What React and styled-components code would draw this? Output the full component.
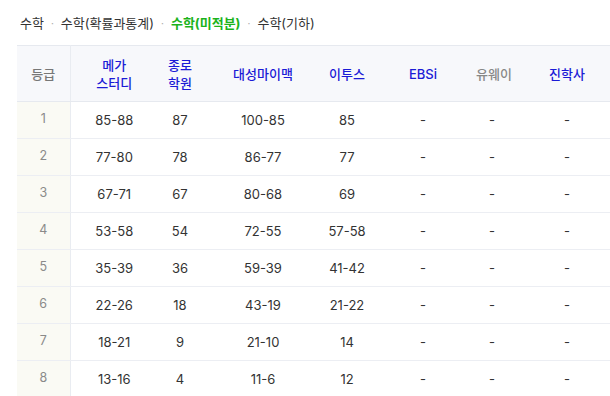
import React from 'react';
import styled, { createGlobalStyle } from 'styled-components';

const GlobalStyle = createGlobalStyle`
  html, body {
    margin: 0;
    padding: 0;
    background: #fff;
    overflow: hidden;
  }
  body {
    font-family: "Inter", "Noto Sans CJK KR", sans-serif;
    -webkit-font-smoothing: antialiased;
  }
`;

const Wrapper = styled.div`
  width: 610px;
  height: 396px;
  overflow: hidden;
`;

const Tabs = styled.div`
  display: flex;
  align-items: center;
  height: 45px;
  padding-left: 20px;
  box-sizing: border-box;
  font-size: 13px;
  color: #333;
`;

const Tab = styled.span`
  color: ${(p) => (p.active ? '#1bb31b' : '#333')};
  font-weight: ${(p) => (p.active ? 700 : 400)};
`;

const Dot = styled.span`
  color: #aaa;
  font-size: 10px;
  margin: 0 7px;
`;

const TableWrap = styled.div`
  padding-left: 17px;
`;

const Table = styled.table`
  border-collapse: collapse;
  table-layout: fixed;
  width: 609px;
  font-size: 13px;
`;

const HeadCell = styled.th`
  height: 55px;
  padding: 0;
  background: #f7f8fb;
  border-top: 1px solid #e6e9ef;
  border-bottom: 1px solid #e6e9ef;
  border-right: ${(p) => (p.first ? '1px solid #e9ecf1' : 'none')};
  font-weight: 500;
  line-height: 18px;
  white-space: nowrap;
  color: ${(p) => p.tone};
`;

const Row = styled.tr`
  height: 37px;
`;

const Cell = styled.td`
  height: 36px;
  padding: 0;
  line-height: 16px;
  text-align: center;
  color: #333;
  border-bottom: 1px solid #eceef3;
  box-sizing: border-box;
`;

const GradeCell = styled(Cell)`
  background: #fafaf4;
  border-right: 1px solid #e9ecf1;
  color: #8a8a8a;
  font-size: 12.5px;
  padding-bottom: 3px;
`;

const BLUE = '#1b1bd6';

const columns = [
  { label: ['등급'], width: 53, tone: '#777' },
  { label: ['메가', '스터디'], width: 88, tone: BLUE },
  { label: ['종로', '학원'], width: 44, tone: BLUE },
  { label: ['대성마이맥'], width: 122, tone: BLUE },
  { label: ['이투스'], width: 46, tone: BLUE },
  { label: ['EBSi'], width: 106, tone: BLUE },
  { label: ['유웨이'], width: 32, tone: '#888' },
  { label: ['진학사'], width: 118, tone: BLUE },
];

const rows = [
  ['1', '85-88', '87', '100-85', '85'],
  ['2', '77-80', '78', '86-77', '77'],
  ['3', '67-71', '67', '80-68', '69'],
  ['4', '53-58', '54', '72-55', '57-58'],
  ['5', '35-39', '36', '59-39', '41-42'],
  ['6', '22-26', '18', '43-19', '21-22'],
  ['7', '18-21', '9', '21-10', '14'],
  ['8', '13-16', '4', '11-6', '12'],
];

const tabs = ['수학', '수학(확률과통계)', '수학(미적분)', '수학(기하)'];

function App() {
  return (
    <Wrapper>
      <GlobalStyle />
      <Tabs>
        {tabs.map((t, i) => (
          <React.Fragment key={t}>
            {i > 0 && <Dot>·</Dot>}
            <Tab active={i === 2}>{t}</Tab>
          </React.Fragment>
        ))}
      </Tabs>
      <TableWrap>
        <Table>
          <colgroup>
            {columns.map((c, i) => (
              <col key={i} style={{ width: c.width }} />
            ))}
          </colgroup>
          <thead>
            <tr>
              {columns.map((c, i) => (
                <HeadCell key={i} first={i === 0} tone={c.tone}>
                  {c.label.map((l, j) => (
                    <div key={j}>{l}</div>
                  ))}
                </HeadCell>
              ))}
            </tr>
          </thead>
          <tbody>
            {rows.map((r) => (
              <Row key={r[0]}>
                <GradeCell>{r[0]}</GradeCell>
                {r.slice(1).map((v, i) => (
                  <Cell key={i}>{v}</Cell>
                ))}
                <Cell>-</Cell>
                <Cell>-</Cell>
                <Cell>-</Cell>
              </Row>
            ))}
          </tbody>
        </Table>
      </TableWrap>
    </Wrapper>
  );
}

export default App;
